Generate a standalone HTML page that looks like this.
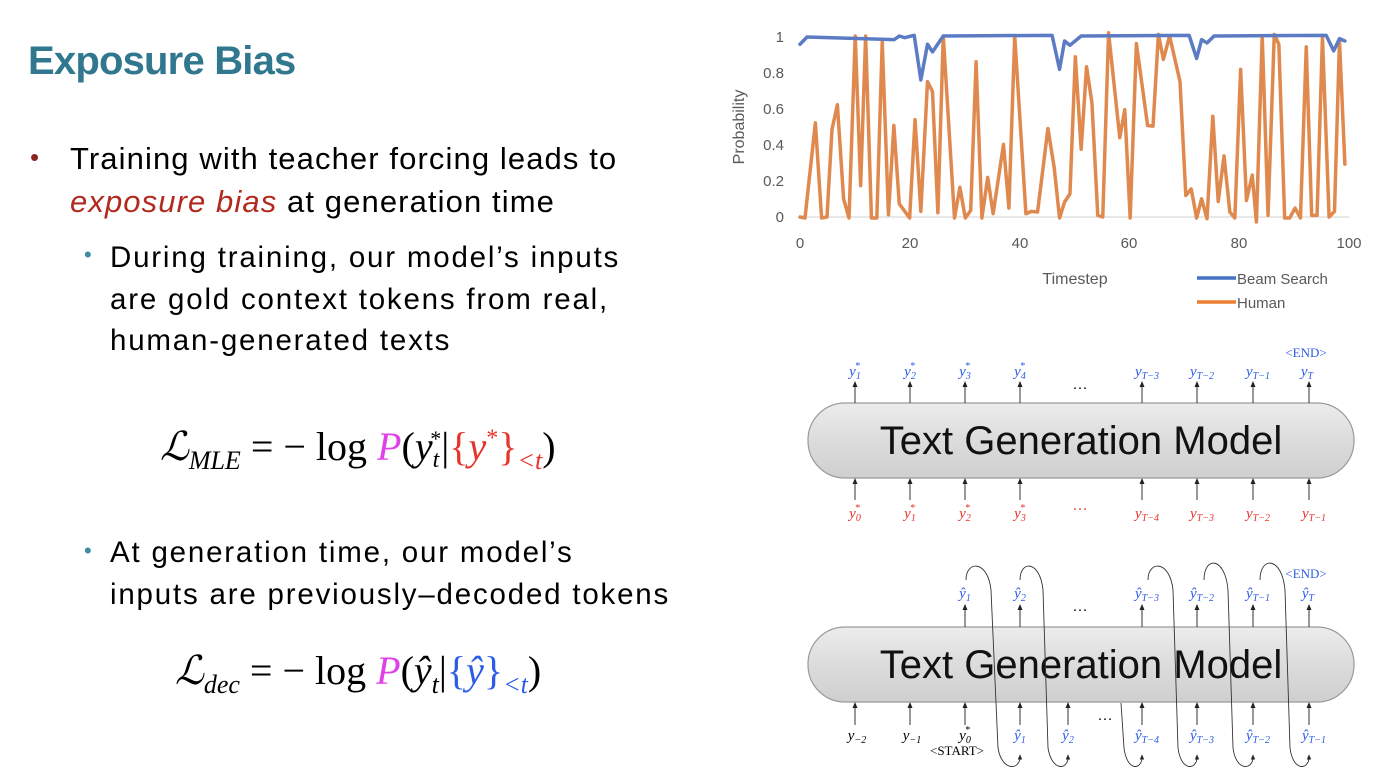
<!DOCTYPE html>
<html><head><meta charset="utf-8"><style>
html,body{margin:0;padding:0;background:#fff;}
body{width:1374px;height:774px;position:relative;overflow:hidden;font-family:"Liberation Sans",sans-serif;}
.t{position:absolute;white-space:nowrap;color:#000;}
.m{font-family:"Liberation Serif",serif;}
</style></head><body>
<div class="t" style="left:28px;top:39px;font-size:40px;font-weight:bold;color:#31788f;letter-spacing:-0.8px">Exposure Bias</div>
<div class="t" style="left:30px;top:142px;font-size:26px;color:#8b2520">•</div>
<div class="t" style="left:70px;top:141px;font-size:31px;letter-spacing:1.1px">Training with teacher forcing leads to</div>
<div class="t" style="left:70px;top:184px;font-size:31px;letter-spacing:1.1px"><i style="color:#b22a1e">exposure bias</i> at generation time</div>
<div class="t" style="left:84px;top:242px;font-size:22px;color:#3f8aa0">•</div>
<div class="t" style="left:110px;top:237px;font-size:29.5px;letter-spacing:1.8px;line-height:41.5px">During training, our model’s inputs<br>are gold context tokens from real,<br>human-generated texts</div>
<div class="t m" style="left:160px;top:423px;font-size:40px;"><i>ℒ<sub style="font-size:26px">MLE</sub></i> = − log <i style="color:#e040e8">P</i>(<i>y</i><sub style="font-size:24px;position:relative;top:-2px"><i>t</i></sub><sup style="font-size:22px;margin-left:-9px">*</sup>|<span style="color:#e8332a">{<i>y</i><sup style="font-size:24px">*</sup>}<sub style="font-size:26px"><i>&lt;t</i></sub></span>)</div>
<div class="t" style="left:84px;top:538px;font-size:22px;color:#3f8aa0">•</div>
<div class="t" style="left:110px;top:532px;font-size:29.5px;letter-spacing:1.8px;line-height:41.5px">At generation time, our model’s<br>inputs are previously–decoded tokens</div>
<div class="t m" style="left:175px;top:647px;font-size:40px;"><i>ℒ<sub style="font-size:26px">dec</sub></i> = − log <i style="color:#e040e8">P</i>(<i>ŷ<sub style="font-size:26px">t</sub></i>|<span style="color:#2b5ce6">{<i>ŷ</i>}<sub style="font-size:26px"><i>&lt;t</i></sub></span>)</div>

<svg width="1374" height="774" style="position:absolute;left:0;top:0" font-family="Liberation Sans, sans-serif">
<defs>
<linearGradient id="g" x1="0" y1="0" x2="0" y2="1"><stop offset="0" stop-color="#ececec"/><stop offset="0.5" stop-color="#dcdcdc"/><stop offset="1" stop-color="#cfcfcf"/></linearGradient>
<marker id="ar" markerWidth="6" markerHeight="6" refX="3" refY="3" orient="auto"><path d="M0,0.5 L6,3 L0,5.5z" fill="#222"/></marker>
</defs>
<g fill="#595959" font-size="15" text-anchor="end">
<text x="784" y="42">1</text><text x="784" y="78">0.8</text><text x="784" y="114">0.6</text><text x="784" y="150">0.4</text><text x="784" y="186">0.2</text><text x="784" y="222">0</text>
</g>
<g fill="#595959" font-size="15" text-anchor="middle">
<text x="800" y="248">0</text><text x="910" y="248">20</text><text x="1020" y="248">40</text><text x="1129" y="248">60</text><text x="1239" y="248">80</text><text x="1349" y="248">100</text>
<text x="1075" y="284" font-size="16">Timestep</text>
</g>
<text transform="translate(744,127) rotate(-90)" fill="#595959" font-size="16" text-anchor="middle">Probability</text>
<line x1="800" y1="217" x2="1349" y2="217" stroke="#d0d0d0" stroke-width="1"/>
<line x1="1197" y1="278" x2="1236" y2="278" stroke="#4472c4" stroke-width="3.5"/>
<text x="1237" y="284" fill="#595959" font-size="15">Beam Search</text>
<line x1="1197" y1="302" x2="1236" y2="302" stroke="#ed7d31" stroke-width="3.5"/>
<text x="1237" y="308" fill="#595959" font-size="15">Human</text>
<g transform="translate(719.85,20.48) scale(0.4153,0.3303)" fill="none" stroke-linejoin="round" stroke-linecap="round">
<polyline vector-effect="non-scaling-stroke" stroke="#e0894f" stroke-width="3.5" points="193,595 205,598 230,310 245,598 258,595 270,330 283,255 298,540 311,598 326,47 339,500 351,47 365,598 378,598 391,65 406,588 419,318 432,555 457,598 470,300 484,578 500,185 512,215 525,582 538,47 565,598 578,505 591,598 604,575 617,125 631,598 645,475 658,585 683,375 696,568 710,47 737,585 750,578 765,580 790,327 805,445 818,598 830,550 843,525 856,110 870,390 883,140 896,250 910,590 922,595 936,37 963,355 975,270 988,598 1003,70 1030,318 1043,320 1056,42 1068,118 1083,47 1108,185 1122,530 1135,510 1148,598 1160,540 1173,600 1187,290 1200,548 1214,410 1228,580 1240,598 1254,148 1268,545 1282,468 1292,610 1306,47 1320,590 1335,42 1346,72 1360,598 1372,598 1385,568 1398,598 1412,80 1425,590 1438,590 1451,50 1467,595 1480,578 1492,60 1505,435"/>
<polyline vector-effect="non-scaling-stroke" stroke="#5b7cc4" stroke-width="3.5" points="193,72 210,50 420,58 432,47 445,52 468,45 484,180 500,72 512,95 538,47 800,45 818,148 830,62 843,75 870,47 1130,45 1148,115 1160,58 1173,68 1190,47 1460,45 1478,92 1492,55 1505,62"/>
</g>

<rect x="808" y="403" width="546" height="75" rx="37" fill="url(#g)" stroke="#9a9a9a" stroke-width="1.2"/>
<text x="1081" y="454" font-size="40" text-anchor="middle" fill="#111">Text Generation Model</text>
<g stroke="#333" stroke-width="1" marker-end="url(#ar)">
<line x1="855" y1="403" x2="855" y2="384"/><line x1="910" y1="403" x2="910" y2="384"/><line x1="965" y1="403" x2="965" y2="384"/><line x1="1020" y1="403" x2="1020" y2="384"/><line x1="1142" y1="403" x2="1142" y2="384"/><line x1="1197" y1="403" x2="1197" y2="384"/><line x1="1253" y1="403" x2="1253" y2="384"/><line x1="1309" y1="403" x2="1309" y2="384"/>
<line x1="855" y1="500" x2="855" y2="481"/><line x1="910" y1="500" x2="910" y2="481"/><line x1="965" y1="500" x2="965" y2="481"/><line x1="1020" y1="500" x2="1020" y2="481"/><line x1="1142" y1="500" x2="1142" y2="481"/><line x1="1197" y1="500" x2="1197" y2="481"/><line x1="1253" y1="500" x2="1253" y2="481"/><line x1="1309" y1="500" x2="1309" y2="481"/>
</g>
<g font-family="Liberation Serif, serif" font-style="italic" font-size="15" fill="#2b5ce6" text-anchor="middle">
<text x="855" y="376">y<tspan font-size="10" dy="3">1</tspan><tspan font-size="10" dx="-6" dy="-10">*</tspan></text>
<text x="910" y="376">y<tspan font-size="10" dy="3">2</tspan><tspan font-size="10" dx="-6" dy="-10">*</tspan></text>
<text x="965" y="376">y<tspan font-size="10" dy="3">3</tspan><tspan font-size="10" dx="-6" dy="-10">*</tspan></text>
<text x="1020" y="376">y<tspan font-size="10" dy="3">4</tspan><tspan font-size="10" dx="-6" dy="-10">*</tspan></text>
<text x="1147" y="376">y<tspan font-size="10" dy="3">T−3</tspan></text>
<text x="1202" y="376">y<tspan font-size="10" dy="3">T−2</tspan></text>
<text x="1258" y="376">y<tspan font-size="10" dy="3">T−1</tspan></text>
<text x="1307" y="376">y<tspan font-size="10" dy="3">T</tspan></text>
<text x="1306" y="357" font-style="normal" font-size="13">&lt;END&gt;</text>
</g>
<g font-family="Liberation Serif, serif" font-style="italic" font-size="15" fill="#e8332a" text-anchor="middle">
<text x="855" y="518">y<tspan font-size="10" dy="3">0</tspan><tspan font-size="10" dx="-6" dy="-10">*</tspan></text>
<text x="910" y="518">y<tspan font-size="10" dy="3">1</tspan><tspan font-size="10" dx="-6" dy="-10">*</tspan></text>
<text x="965" y="518">y<tspan font-size="10" dy="3">2</tspan><tspan font-size="10" dx="-6" dy="-10">*</tspan></text>
<text x="1020" y="518">y<tspan font-size="10" dy="3">3</tspan><tspan font-size="10" dx="-6" dy="-10">*</tspan></text>
<text x="1147" y="518">y<tspan font-size="10" dy="3">T−4</tspan></text>
<text x="1202" y="518">y<tspan font-size="10" dy="3">T−3</tspan></text>
<text x="1258" y="518">y<tspan font-size="10" dy="3">T−2</tspan></text>
<text x="1314" y="518">y<tspan font-size="10" dy="3">T−1</tspan></text>
<text x="1080" y="514" font-style="normal" font-size="15">···</text>
</g>
<text x="1080" y="392" font-size="15" text-anchor="middle">···</text>

<rect x="808" y="627" width="546" height="75" rx="37" fill="url(#g)" stroke="#9a9a9a" stroke-width="1.2"/>
<text x="1081" y="678" font-size="40" text-anchor="middle" fill="#111">Text Generation Model</text>
<g stroke="#333" stroke-width="1" marker-end="url(#ar)">
<line x1="965" y1="627" x2="965" y2="607"/><line x1="1020" y1="627" x2="1020" y2="607"/><line x1="1142" y1="627" x2="1142" y2="607"/><line x1="1197" y1="627" x2="1197" y2="607"/><line x1="1253" y1="627" x2="1253" y2="607"/><line x1="1309" y1="627" x2="1309" y2="607"/>
<line x1="855" y1="725" x2="855" y2="705"/><line x1="910" y1="725" x2="910" y2="705"/><line x1="965" y1="725" x2="965" y2="705"/><line x1="1020" y1="725" x2="1020" y2="705"/><line x1="1068" y1="725" x2="1068" y2="705"/><line x1="1142" y1="725" x2="1142" y2="705"/><line x1="1197" y1="725" x2="1197" y2="705"/><line x1="1253" y1="725" x2="1253" y2="705"/><line x1="1309" y1="725" x2="1309" y2="705"/>
</g>
<g fill="none" stroke="#333" stroke-width="0.9" marker-end="url(#ar)">
<path d="M966 580 C966 560 988 560 991 590 L998 748 C1002 772 1020 770 1020 757"/>
<path d="M1020 580 C1020 560 1040 560 1043 590 L1048 748 C1052 772 1068 770 1068 757"/>
<path d="M1121 703 L1124 748 C1127 772 1142 770 1142 757"/>
<path d="M1148 580 C1148 560 1170 560 1173 590 L1178 748 C1181 772 1197 770 1197 757"/>
<path d="M1204 580 C1204 556 1225 556 1228 590 L1233 748 C1236 772 1253 770 1253 757"/>
<path d="M1260 580 C1260 556 1282 556 1285 590 L1290 748 C1293 772 1309 770 1309 757"/>
</g>
<g font-family="Liberation Serif, serif" font-style="italic" font-size="15" fill="#2b5ce6" text-anchor="middle">
<text x="965" y="598">ŷ<tspan font-size="10" dy="3">1</tspan></text>
<text x="1020" y="598">ŷ<tspan font-size="10" dy="3">2</tspan></text>
<text x="1147" y="598">ŷ<tspan font-size="10" dy="3">T−3</tspan></text>
<text x="1202" y="598">ŷ<tspan font-size="10" dy="3">T−2</tspan></text>
<text x="1258" y="598">ŷ<tspan font-size="10" dy="3">T−1</tspan></text>
<text x="1308" y="598">ŷ<tspan font-size="10" dy="3">T</tspan></text>
<text x="1306" y="578" font-style="normal" font-size="13">&lt;END&gt;</text>
<text x="1020" y="740">ŷ<tspan font-size="10" dy="3">1</tspan></text>
<text x="1068" y="740">ŷ<tspan font-size="10" dy="3">2</tspan></text>
<text x="1147" y="740">ŷ<tspan font-size="10" dy="3">T−4</tspan></text>
<text x="1202" y="740">ŷ<tspan font-size="10" dy="3">T−3</tspan></text>
<text x="1258" y="740">ŷ<tspan font-size="10" dy="3">T−2</tspan></text>
<text x="1314" y="740">ŷ<tspan font-size="10" dy="3">T−1</tspan></text>
</g>
<g font-family="Liberation Serif, serif" font-style="italic" font-size="15" fill="#000" text-anchor="middle">
<text x="857" y="740">y<tspan font-size="10" dy="3">−2</tspan></text>
<text x="912" y="740">y<tspan font-size="10" dy="3">−1</tspan></text>
<text x="965" y="740">y<tspan font-size="10" dy="3">0</tspan><tspan font-size="10" dx="-6" dy="-10">*</tspan></text>
<text x="957" y="755" font-style="normal" font-size="13">&lt;START&gt;</text>
</g>
<text x="1080" y="614" font-size="15" text-anchor="middle">···</text>
<text x="1105" y="723" font-size="15" text-anchor="middle">···</text>
</svg>
</body></html>
